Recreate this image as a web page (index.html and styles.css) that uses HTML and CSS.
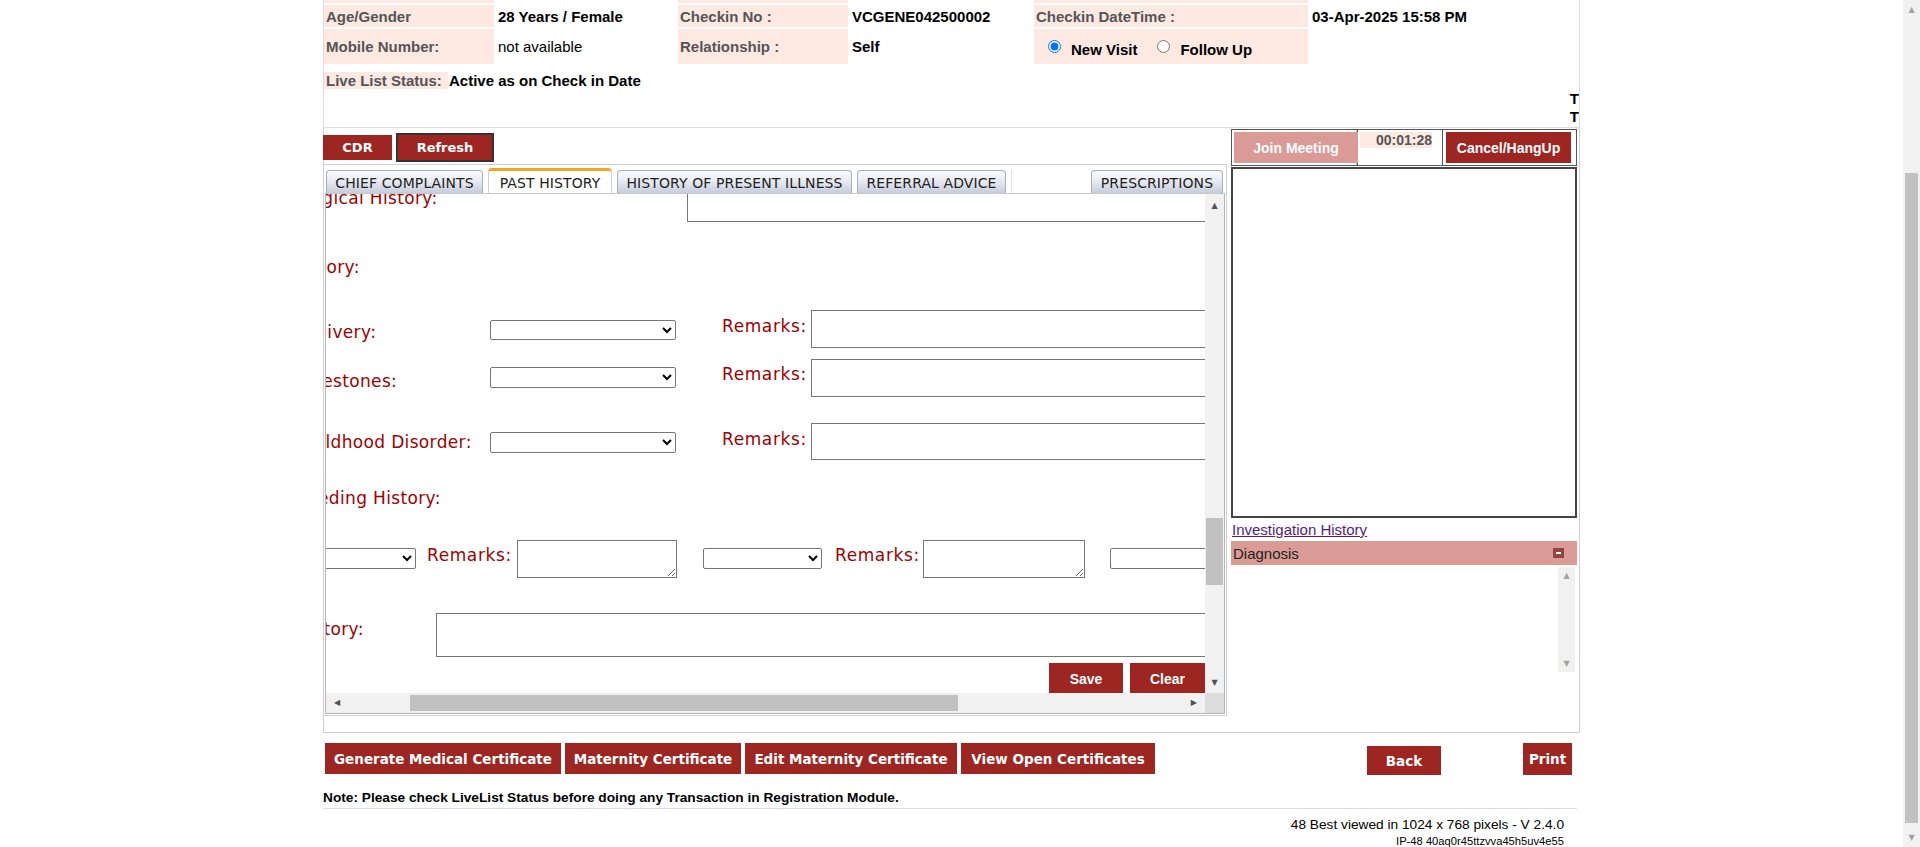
FILE: index.html
```html
<!DOCTYPE html>
<html>
<head>
<meta charset="utf-8">
<title>Consultation</title>
<link rel="stylesheet" href="styles.css">
</head>
<body>
<div class="viewport">
  <div class="page">
    <div class="header">
      <div class="info">
        <div class="lab r0"></div><div class="val r0"></div><div class="lab r0"></div><div class="val r0"></div><div class="lab r0"></div><div class="val r0"></div>
        <div class="lab">Age/Gender</div><div class="val b">28 Years / Female</div>
        <div class="lab">Checkin No :</div><div class="val b">VCGENE042500002</div>
        <div class="lab">Checkin DateTime :</div><div class="val b">03-Apr-2025 15:58 PM</div>
        <div class="lab">Mobile Number:</div><div class="val">not available</div>
        <div class="lab">Relationship :</div><div class="val b">Self</div>
        <div class="lab radios">
          <label class="opt"><input type="radio" name="visit" checked><span>New Visit</span></label>
          <label class="opt"><input type="radio" name="visit"><span>Follow Up</span></label>
        </div><div class="val"></div>
      </div>
      <div class="live"><span class="livelab">Live List Status:</span><span class="liveval">Active as on Check in Date</span></div>
      <div class="tt">T<br>T</div>
    </div>

    <div class="main">
      <div class="leftcol">
        <div class="toolbar">
          <button class="btn cdr">CDR</button>
          <button class="btn refresh">Refresh</button>
        </div>
        <div class="tabpanel">
          <div class="tabs">
            <div class="tab t1">CHIEF COMPLAINTS</div>
            <div class="tab active t2">PAST HISTORY</div>
            <div class="tab t3">HISTORY OF PRESENT ILLNESS</div>
            <div class="tab t4">REFERRAL ADVICE</div>
            <div class="tab blank"></div>
            <div class="tab t6">PRESCRIPTIONS</div>
          </div>
          <div class="tabcontent">
            <div class="form">
              <div class="forminner">
                <div class="frow ra">
                  <div class="flabel wa ia">Surgical History:</div>
                  <textarea class="ta tall47"></textarea>
                </div>
                <div class="frow rb">
                  <div class="flabel ib">History:</div>
                </div>
                <div class="frow rc">
                  <div class="flabel lc ic m12">Delivery:</div>
                  <select class="sel w186 m10"><option></option></select>
                  <div class="flabel rem r1 m6">Remarks:</div>
                  <textarea class="ta wide h38"></textarea>
                </div>
                <div class="frow rd">
                  <div class="flabel lc id m12">Milestones:</div>
                  <select class="sel w186 m8 h21"><option></option></select>
                  <div class="flabel rem r1 m5">Remarks:</div>
                  <textarea class="ta wide h38"></textarea>
                </div>
                <div class="frow re">
                  <div class="flabel lc ie m9">Childhood Disorder:</div>
                  <select class="sel w186 m9 h21"><option></option></select>
                  <div class="flabel rem r1 m6">Remarks:</div>
                  <textarea class="ta wide h37"></textarea>
                </div>
                <div class="frow rf">
                  <div class="flabel if">Feeding History:</div>
                </div>
                <div class="frow rg">
                  <select class="sel w117 m8 h21"><option></option></select>
                  <div class="flabel rem g1 m5">Remarks:</div>
                  <textarea class="ta w160 h38"></textarea>
                  <select class="sel w119 m8 h21 g2"><option></option></select>
                  <div class="flabel rem g3 m5">Remarks:</div>
                  <textarea class="ta w162 h38"></textarea>
                  <select class="sel w119 m8 h21 g4"><option></option></select>
                </div>
                <div class="frow rh">
                  <div class="flabel lh ih m6">History:</div>
                  <textarea class="ta w900 h44"></textarea>
                </div>
                <div class="frow ri">
                  <button class="btn2 save">Save</button>
                  <button class="btn2 clear">Clear</button>
                </div>
              </div>
            </div>
            <div class="vscroll">
              <div class="arr up">&#9650;</div>
              <div class="vthumb"></div>
              <div class="arr down">&#9660;</div>
            </div>
            <div class="hscroll">
              <div class="harr left">&#9664;</div>
              <div class="hthumb"></div>
              <div class="harr right">&#9654;</div>
            </div>
            <div class="corner"></div>
          </div>
        </div>
      </div>

      <div class="rightcol">
        <div class="meet">
          <div class="mcell c1"><button class="btn3 join">Join Meeting</button></div>
          <div class="mcell c2"><div class="timer">00:01:28</div></div>
          <div class="mcell c3"><button class="btn3 hang">Cancel/HangUp</button></div>
        </div>
        <div class="video"></div>
        <a class="invlink" href="#">Investigation History</a>
        <div class="diagbar"><span>Diagnosis</span><span class="minus"></span></div>
        <div class="diagbody">
          <div class="dscroll"><span>&#9650;</span><span>&#9660;</span></div>
        </div>
      </div>
    </div>

    <div class="actions">
      <button class="btn act a1">Generate Medical Certificate</button>
      <button class="btn act a2">Maternity Certificate</button>
      <button class="btn act a3">Edit Maternity Certificate</button>
      <button class="btn act a4">View Open Certificates</button>
      <button class="btn act back">Back</button>
      <button class="btn act print">Print</button>
    </div>
    <div class="note">Note: Please check LiveList Status before doing any Transaction in Registration Module.</div>
    <div class="rule"></div>
    <div class="foot1">48 Best viewed in 1024 x 768 pixels - V 2.4.0</div>
    <div class="foot2">IP-48 40aq0r45ttzvva45h5uv4e55</div>
  </div>
</div>
<div class="pagescroll">
  <div class="parr ptop">&#9650;</div>
  <div class="pthumb"></div>
  <div class="parr pbot">&#9660;</div>
</div>
</body>
</html>
```

FILE: styles.css
```css
html, body {
  margin: 0;
  padding: 0;
  overflow: hidden;
  background: #fff;
}
.viewport {
  width: 1903px;
  height: 847px;
  overflow: hidden;
}
.page {
  width: 1257px;
  margin: 0 auto;
  font-family: "Liberation Sans", Arial, sans-serif;
  color: #000;
}

/* header */
.header {
  height: 128px;
  box-sizing: border-box;
  border: 1px solid #dcdcdc;
  border-top: none;
  overflow: hidden;
}
.info {
  display: grid;
  grid-template-columns: 170px 180px 170px 182px 274px 1fr;
  grid-template-rows: 3px 22px 35px;
  column-gap: 2px;
  row-gap: 2px;
}
.lab {
  background: #fde8e2;
  color: #555;
  font-weight: bold;
  font-size: 15px;
  padding-left: 2px;
  display: flex;
  align-items: center;
  white-space: nowrap;
}
.val {
  font-size: 15px;
  padding-left: 2px;
  display: flex;
  align-items: center;
  white-space: nowrap;
}
.val.b { font-weight: bold; }
.r0 { padding: 0; }
.radios {
  padding-left: 14px;
  color: #000;
}
.opt {
  display: inline-flex;
  align-items: center;
  margin-right: 20px;
}
.opt input {
  margin: 0 10px 0 0;
  width: 13px;
  height: 13px;
}
.opt span {
  margin-top: 5px;
}
.live {
  margin-top: 8px;
  height: 17px;
  display: flex;
  align-items: center;
  font-size: 15px;
  font-weight: bold;
}
.livelab {
  background: #fde8e2;
  color: #555;
  height: 17px;
  line-height: 17px;
  width: 122px;
  padding-left: 2px;
}
.liveval {
  padding-left: 1px;
}
.tt {
  margin-top: 1px;
  text-align: right;
  font-weight: bold;
  font-size: 15px;
  line-height: 18px;
}

/* buttons */
.btn {
  background: #9d2622;
  color: #fff;
  border: none;
  padding: 0;
  font-family: "DejaVu Sans", Verdana, sans-serif;
  font-weight: bold;
  font-size: 13px;
  display: flex;
  align-items: center;
  justify-content: center;
  cursor: pointer;
}
.btn2, .btn3 {
  background: #9d2622;
  color: #fff;
  border: none;
  padding: 0;
  font-family: "Liberation Sans", Arial, sans-serif;
  font-weight: bold;
  font-size: 14px;
  display: flex;
  align-items: center;
  justify-content: center;
}

/* main */
.main {
  display: flex;
  height: 605px;
  box-sizing: border-box;
  border: 1px solid #cfcfcf;
  border-top: none;
}
.leftcol {
  width: 903px;
  padding-top: 5px;
}
.toolbar {
  display: flex;
  align-items: center;
  height: 29px;
}
.cdr {
  width: 69px;
  height: 25px;
  margin-left: -1px;
}
.refresh {
  width: 98px;
  height: 29px;
  margin-left: 4px;
  border: 2px solid #333;
  box-sizing: border-box;
}
.tabpanel {
  margin-top: 2px;
  height: 552px;
  box-sizing: border-box;
  border-top: 1px solid #cfcfcf;
  border-right: 1px solid #cfcfcf;
  border-bottom: 1px solid #cfcfcf;
  padding-top: 5px;
}
.tabs {
  display: flex;
  align-items: flex-end;
  height: 23px;
  gap: 5px;
  margin-left: 2px;
}
.tab {
  height: 23px;
  box-sizing: border-box;
  padding: 2px 0 0 0;
  border: 1px solid #a7aec0;
  border-bottom: none;
  border-radius: 4px 4px 0 0;
  background: linear-gradient(#fbfbfd 0%, #e8ebf2 45%, #c6ccdb 100%);
  font-family: "DejaVu Sans", Verdana, sans-serif;
  font-size: 14px;
  letter-spacing: 0.1px;
  color: #222;
  display: flex;
  align-items: center;
  justify-content: center;
  white-space: nowrap;
  flex: none;
}
.t1 { width: 157px; }
.t2 { width: 124px; }
.t3 { width: 235px; }
.t4 { width: 149px; }
.t6 { width: 132px; }
.tab.active {
  height: 25px;
  margin-top: -2px;
  background: #fff;
  border: 1px solid #d0d0d0;
  border-top: 3px solid #f3a52b;
  border-bottom: none;
  padding-top: 2px;
}
.tab.blank {
  width: 75px;
  background: #fff;
  border: none;
  border-left: 1px solid #dde;
  border-radius: 0;
}
.tabcontent {
  margin-left: 1px;
  width: 900px;
  height: 521px;
  box-sizing: border-box;
  border: 1px solid #b5b5b5;
  border-top: 1px solid #c8c8c8;
  display: grid;
  grid-template-columns: 879px 19px;
  grid-template-rows: 499px 20px;
}

/* form */
.form {
  overflow: hidden;
  background: #fff;
}
.forminner {
  margin: -20px 0 0 -27px;
  width: 1500px;
}
.frow {
  display: flex;
  align-items: flex-start;
}
.flabel {
  font-family: "DejaVu Sans", Verdana, sans-serif;
  font-size: 17px;
  line-height: 20px;
  letter-spacing: 0.35px;
  color: #a00000;
  white-space: nowrap;
  flex: none;
  overflow: hidden;
}
.ta {
  box-sizing: border-box;
  border: 1px solid #767676;
  flex: none;
  margin: 0;
  font-family: "Liberation Sans", Arial, sans-serif;
}
.sel {
  box-sizing: border-box;
  height: 20px;
  border: 1px solid #767676;
  border-radius: 2px;
  background: #fff;
  flex: none;
  margin-bottom: 0;
  margin-left: 0;
  margin-right: 0;
  font-size: 13px;
}
.ra { height: 48px; align-items: center; }
.wa { width: 388px; }
.tall47 { width: 700px; height: 47px; }
.rb { margin-top: 35px; }
.rc { margin-top: 33px; }
.rd { margin-top: 11px; }
.re { margin-top: 26px; }
.rf { margin-top: 28px; }
.rg { margin-top: 32px; }
.rh { margin-top: 35px; }
.ri { margin-top: 6px; padding-left: 750px; }
.lc { width: 191px; }
.lh { width: 137px; }
.ia { text-indent: -6px; }
.ib { text-indent: -7px; }
.ic { text-indent: -1px; }
.id { text-indent: -2px; }
.ie { text-indent: -2px; }
.if { text-indent: -1px; }
.ih { text-indent: -3px; }
.w186 { width: 186px; }
.w117 { width: 117px; }
.w119 { width: 119px; }
.w160 { width: 160px; }
.w162 { width: 162px; }
.w900 { width: 900px; }
.wide { width: 600px; }
.h21 { height: 21px; }
.h37 { height: 37px; }
.h38 { height: 38px; }
.h44 { height: 44px; }
.m5 { margin-top: 5px; }
.m6 { margin-top: 6px; }
.m8 { margin-top: 8px; }
.m9 { margin-top: 9px; }
.m10 { margin-top: 10px; }
.m12 { margin-top: 12px; }
.rem { letter-spacing: 0.6px; overflow: visible; }
.rem.r1 { margin-left: 46px; width: 89px; }
.rem.g1 { margin-left: 11px; width: 90px; }
.g2 { margin-left: 26px; }
.rem.g3 { margin-left: 13px; width: 88px; }
.g4 { margin-left: 25px; }
.save { width: 74px; height: 31px; }
.clear { width: 75px; height: 31px; margin-left: 7px; }

/* inner scrollbars */
.vscroll {
  background: #f1f1f1;
  position: relative;
}
.arr {
  position: absolute;
  left: 0;
  width: 19px;
  text-align: center;
  font-size: 8px;
  color: #505050;
  font-family: "DejaVu Sans", sans-serif;
}
.arr.up { top: 7px; }
.arr.down { bottom: 6px; }
.vthumb {
  position: absolute;
  left: 1px;
  width: 17px;
  top: 324px;
  height: 67px;
  background: #c1c1c1;
}
.hscroll {
  background: #f1f1f1;
  position: relative;
}
.harr {
  position: absolute;
  top: 5px;
  font-size: 8px;
  color: #505050;
  font-family: "DejaVu Sans", sans-serif;
}
.harr.left { left: 8px; }
.harr.right { right: 8px; }
.hthumb {
  position: absolute;
  top: 2px;
  height: 16px;
  left: 84px;
  width: 548px;
  background: #c1c1c1;
}
.corner {
  background: #dcdcdc;
}

/* right column */
.rightcol {
  width: 346px;
  margin-left: 4px;
  padding-top: 1px;
}
.meet {
  display: flex;
  height: 37px;
  box-sizing: border-box;
  border: 1px solid #555;
}
.mcell {
  padding-top: 2px;
  box-sizing: border-box;
}
.c1 {
  width: 126px;
  padding-left: 2px;
  border-right: 1px solid #555;
  box-shadow: inset -1px 0 0 #bbb;
}
.c2 {
  width: 85px;
  padding-left: 2px;
  border-right: 1px solid #555;
}
.c3 {
  flex: 1;
  padding-left: 3px;
}
.btn3 {
  height: 31px;
}
.join {
  width: 124px;
  background: #da9a95;
}
.hang {
  width: 125px;
}
.timer {
  width: 72px;
  height: 16px;
  line-height: 16px;
  background: #fde8e2;
  color: #555;
  font-weight: bold;
  font-size: 14px;
  text-align: right;
}
.video {
  margin-top: 1px;
  height: 351px;
  box-sizing: border-box;
  border: 2px solid #444;
}
.invlink {
  display: block;
  margin-top: 3px;
  padding-left: 1px;
  font-size: 15px;
  line-height: 17px;
  color: #551a8b;
  text-decoration: underline;
}
.diagbar {
  margin-top: 3px;
  height: 24px;
  background: #da9a95;
  display: flex;
  align-items: center;
  justify-content: space-between;
  padding: 0 13px 0 2px;
  font-size: 15px;
  color: #222;
}
.minus {
  width: 11px;
  height: 10px;
  background: #8f4641;
  position: relative;
}
.minus::after {
  content: "";
  position: absolute;
  left: 3px;
  top: 4px;
  width: 5px;
  height: 2px;
  background: #fff;
}
.diagbody {
  margin-top: 2px;
  height: 105px;
  display: flex;
  justify-content: flex-end;
}
.dscroll {
  width: 17px;
  margin-right: 2px;
  background: #f1f1f1;
  display: flex;
  flex-direction: column;
  justify-content: space-between;
  align-items: center;
  padding: 4px 0;
  box-sizing: border-box;
  font-size: 8px;
  color: #a3a3a3;
  font-family: "DejaVu Sans", sans-serif;
}

/* bottom */
.actions {
  display: flex;
  align-items: flex-start;
  margin-top: 10px;
  padding-left: 2px;
}
.act {
  height: 31px;
  font-size: 13.5px;
  white-space: nowrap;
}
.a1 { width: 236px; }
.a2 { width: 176px; margin-left: 4px; }
.a3 { width: 212px; margin-left: 4px; }
.a4 { width: 194px; margin-left: 4px; }
.back { width: 74px; margin-left: 212px; margin-top: 3px; height: 29px; }
.print { width: 49px; margin-left: 82px; height: 32px; }
.note {
  margin-top: 15px;
  font-size: 13.7px;
  font-weight: bold;
  line-height: 16px;
  white-space: nowrap;
}
.rule {
  margin-top: 2px;
  height: 1px;
  width: 1254px;
  background: #dcdcdc;
}
.foot1 {
  margin-top: 7px;
  text-align: right;
  padding-right: 16px;
  font-size: 13.7px;
  line-height: 17px;
}
.foot2 {
  margin-top: 1px;
  text-align: right;
  padding-right: 16px;
  font-size: 11.2px;
  line-height: 14px;
}

/* page scrollbar */
.pagescroll {
  position: fixed;
  top: 0;
  right: 0;
  width: 17px;
  height: 847px;
  background: #f1f1f1;
}
.pthumb {
  position: absolute;
  top: 173px;
  left: 2px;
  width: 13px;
  height: 650px;
  background: #c1c1c1;
}
.parr {
  position: absolute;
  left: 0;
  width: 17px;
  text-align: center;
  font-size: 8px;
  color: #a3a3a3;
  font-family: "DejaVu Sans", sans-serif;
}
.ptop { top: 5px; }
.pbot { bottom: 5px; }
```
